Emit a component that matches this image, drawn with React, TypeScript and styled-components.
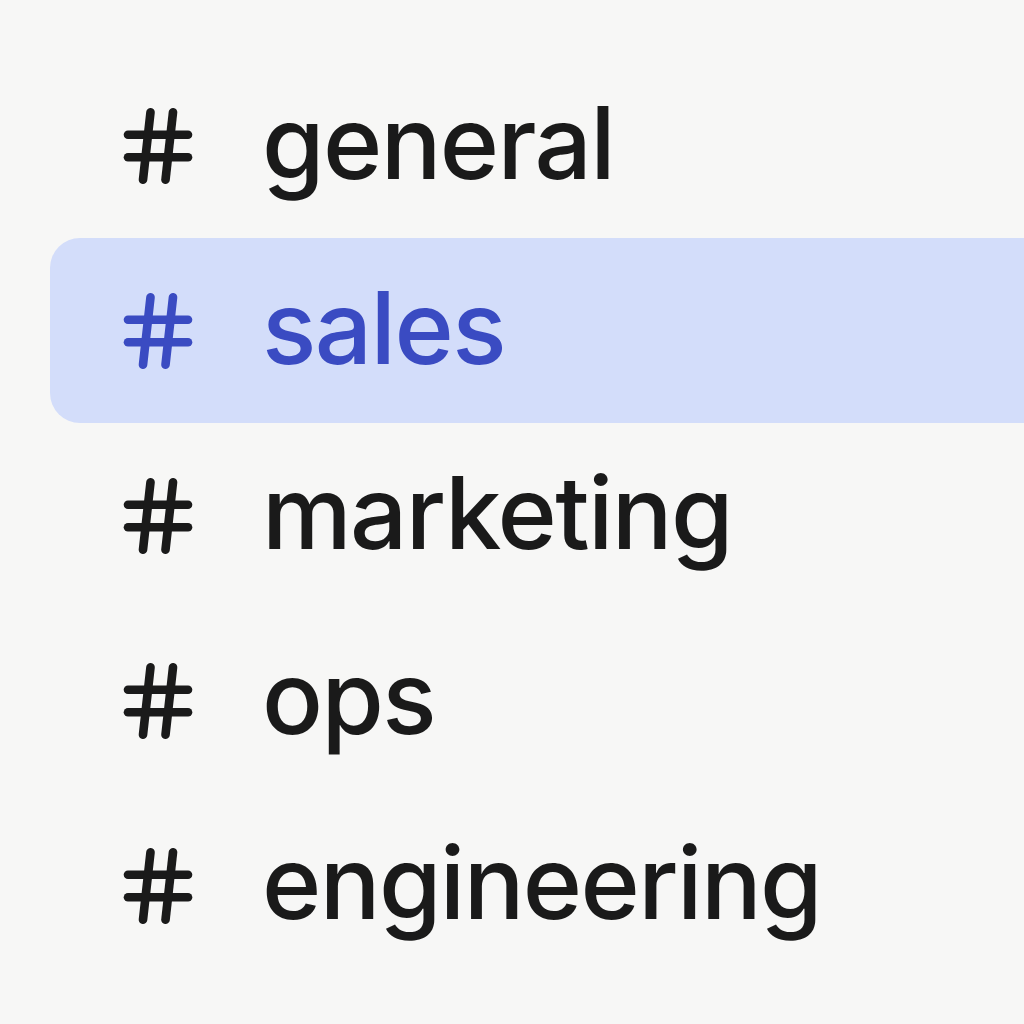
import styled, { createGlobalStyle } from "styled-components";
import { Hash } from "lucide-react";

const GlobalStyle = createGlobalStyle`
    html, body {
        margin: 0;
        padding: 0;
        background: #f7f7f6;
        overflow: hidden;
    }
`;

const Page = styled.main`
    width: 1024px;
    height: 1024px;
    padding: 53px 0 0 50px;
    box-sizing: border-box;
    font-family: Inter, "Noto Sans", sans-serif;
`;

const ChannelList = styled.ul`
    list-style: none;
    margin: 0;
    padding: 0;
    display: flex;
    flex-direction: column;
`;

const ChannelRow = styled.li<{ $active?: boolean }>`
    display: flex;
    align-items: center;
    gap: 59px;
    height: 185px;
    padding-left: 63px;
    border-radius: 30px 0 0 30px;
    background: ${(p) => (p.$active ? "#d3ddfa" : "transparent")};
    color: ${(p) => (p.$active ? "#3a4bc2" : "#1a1a1a")};
`;

const ChannelName = styled.span`
    font-size: 101px;
    font-weight: 500;
    line-height: 1;
    letter-spacing: -1.6px;
    padding-bottom: 6px;
`;

const channels = ["general", "sales", "marketing", "ops", "engineering"];

export default function App() {
    return (
        <Page>
            <GlobalStyle />
            <ChannelList>
                {channels.map((name) => (
                    <ChannelRow key={name} $active={name === "sales"}>
                        <Hash size={90} strokeWidth={2.3} />
                        <ChannelName>{name}</ChannelName>
                    </ChannelRow>
                ))}
            </ChannelList>
        </Page>
    );
}
